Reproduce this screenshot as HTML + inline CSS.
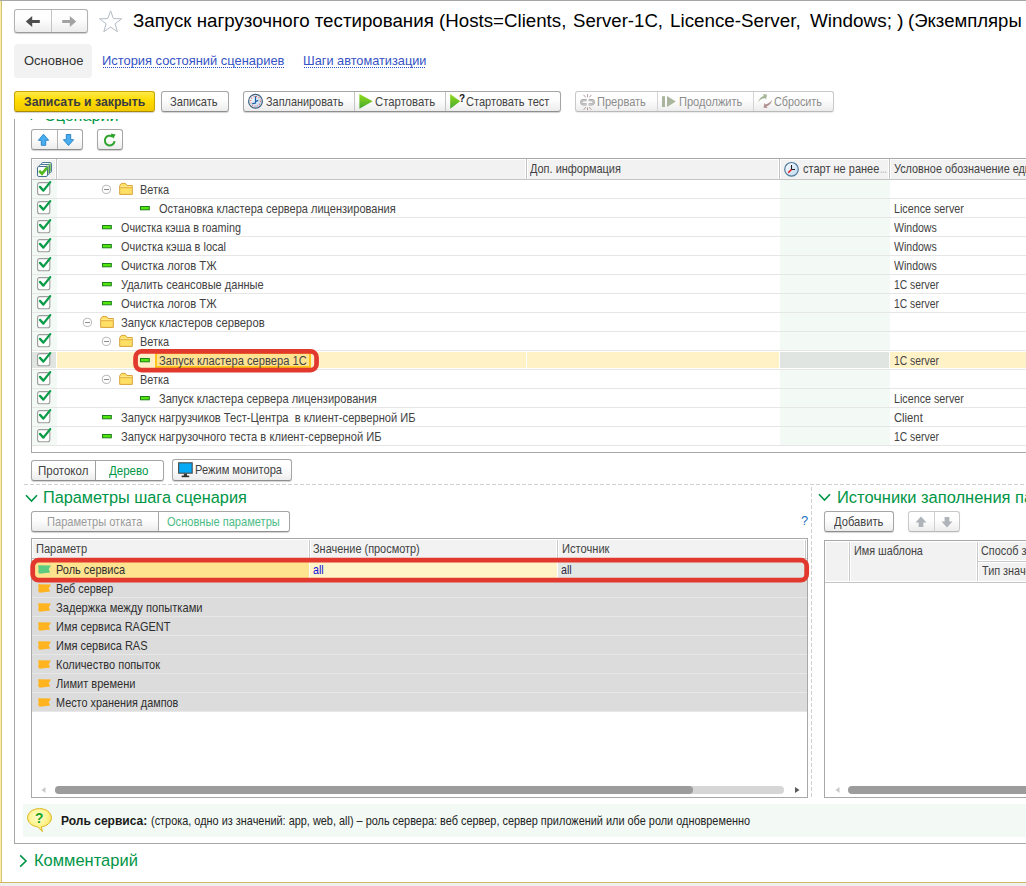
<!DOCTYPE html>
<html lang="ru"><head><meta charset="utf-8"><title>Запуск нагрузочного тестирования</title>
<style>
html,body{margin:0;padding:0;background:#fff}
body{width:1026px;height:886px;position:relative;overflow:hidden;font-family:"Liberation Sans",sans-serif}
.a{position:absolute;box-sizing:border-box}
.t{position:absolute;white-space:pre;line-height:16px;transform-origin:0 0;display:block}
.btn{border:1px solid #a6a6a6;border-bottom-color:#8e8e8e;border-radius:3px;background:linear-gradient(#ffffff 0%,#fdfdfd 45%,#ececec 100%);box-shadow:0 1px 1px rgba(0,0,0,.18)}
.ybtn{border-color:#c8a600;border-bottom-color:#a88a00;background:linear-gradient(#ffe94a 0%,#ffdc00 45%,#f2c900 100%)}
.dis{border-color:#c9c9c9;border-bottom-color:#b9b9b9;box-shadow:0 1px 1px rgba(0,0,0,.08)}
svg{overflow:visible}
</style></head><body>
<div class="a" style="left:0px;top:0px;width:1026px;height:1px;background:#a6a6a6"></div>
<div class="a" style="left:0px;top:1px;width:1px;height:882px;background:#fdeea3"></div>
<div class="a" style="left:1px;top:1px;width:1px;height:882px;background:#d3c27c"></div>
<div class="a" style="left:0px;top:882px;width:1026px;height:1px;background:#cdb85f"></div>
<div class="a" style="left:0px;top:883px;width:1026px;height:3px;background:#f0f0f0"></div>
<div class="a btn" style="left:14px;top:9px;width:74px;height:24px;border-color:#b2b2b2;border-bottom-color:#9a9a9a"></div>
<div class="a" style="left:51px;top:10px;width:1px;height:22px;background:#c4c4c4"></div>
<svg class="a" style="left:24px;top:14px" width="18" height="15" viewBox="0 0 18 15"><path d="M1.8 7.5 L8.2 1.9 V6 H15.8 V9 H8.2 V13.1 Z" fill="#4d4d4d"/></svg>
<svg class="a" style="left:60px;top:14px" width="18" height="15" viewBox="0 0 18 15"><path d="M16.2 7.5 L9.8 1.9 V6 H2.2 V9 H9.8 V13.1 Z" fill="#a3a3a3"/></svg>
<svg class="a" style="left:97px;top:8px" width="28" height="26" viewBox="0 0 28 26"><path d="M13.6 2.8 L16.4 10.6 L24.6 10.8 L18.1 15.8 L20.4 23.7 L13.6 19 L6.8 23.7 L9.1 15.8 L2.6 10.8 L10.8 10.6 Z" fill="#fff" stroke="#b4bcc4" stroke-width="1"/></svg>
<span class="t" style="left:132.60px;top:13.03px;font-size:18.67px;color:#000;transform:scaleX(1.0032);">Запуск нагрузочного тестирования</span>
<span class="t" style="left:439.10px;top:13.03px;font-size:18.67px;color:#000;transform:scaleX(1.0028);">(Hosts=Clients,</span>
<span class="t" style="left:573.10px;top:13.03px;font-size:18.67px;color:#000;transform:scaleX(0.9980);">Server-1C,</span>
<span class="t" style="left:670.10px;top:13.03px;font-size:18.67px;color:#000;transform:scaleX(1.0080);">Licence-Server,</span>
<span class="t" style="left:809.80px;top:13.03px;font-size:18.67px;color:#000;transform:scaleX(1.0131);">Windows;</span>
<span class="t" style="left:897.20px;top:13.03px;font-size:18.67px;color:#000;transform:scaleX(1.0550);">)</span>
<span class="t" style="left:908.30px;top:13.03px;font-size:18.67px;color:#000;transform:scaleX(0.9943);">(Экземпляры</span>
<div class="a" style="left:14px;top:44px;width:78px;height:34px;background:#f2f2f2;border-radius:4px"></div>
<span class="t" style="left:23.60px;top:53.38px;font-size:13.33px;color:#333;transform:scaleX(0.9730);">Основное</span>
<span class="t" style="left:102.10px;top:53.18px;font-size:13.33px;color:#3553c4;transform:scaleX(0.9677);">История состояний сценариев</span>
<div class="a" style="left:103px;top:67px;width:181px;height:1px;background:repeating-linear-gradient(90deg,#2a4fc6 0,#2a4fc6 1px,transparent 1px,transparent 2px)"></div>
<span class="t" style="left:303.10px;top:53.18px;font-size:13.33px;color:#3553c4;transform:scaleX(0.9563);">Шаги автоматизации</span>
<div class="a" style="left:304px;top:67px;width:122px;height:1px;background:repeating-linear-gradient(90deg,#2a4fc6 0,#2a4fc6 1px,transparent 1px,transparent 2px)"></div>
<div class="a btn ybtn" style="left:14px;top:91px;width:141px;height:21px;"></div>
<span class="t" style="left:23.70px;top:93.63px;font-size:12.60px;color:#3a3a42;transform:scaleX(0.9722);font-weight:bold;">Записать и закрыть</span>
<div class="a btn" style="left:161px;top:91px;width:68px;height:21px;"></div>
<span class="t" style="left:170.30px;top:93.63px;font-size:12.60px;color:#424242;transform:scaleX(0.8847);">Записать</span>
<div class="a btn" style="left:243px;top:91px;width:318px;height:21px;"></div>
<div class="a" style="left:354px;top:92px;width:1px;height:19px;background:#c4c4c4"></div>
<div class="a" style="left:445px;top:92px;width:1px;height:19px;background:#c4c4c4"></div>
<svg class="a" style="left:248px;top:93px" width="16" height="17" viewBox="0 0 16 17"><defs><linearGradient id="ck" x1="0" y1="0" x2="1" y2="1"><stop offset="0" stop-color="#ffffff"/><stop offset="1" stop-color="#b9d6f0"/></linearGradient><linearGradient id="pg" x1="0" y1="0" x2="0" y2="1"><stop offset="0" stop-color="#93de1a"/><stop offset="1" stop-color="#44a62e"/></linearGradient></defs><circle cx="7.5" cy="8.3" r="6.9" fill="url(#ck)" stroke="#3f5d7c" stroke-width="1.2"/><circle cx="7.5" cy="8.3" r="4.9" fill="none" stroke="#e8503c" stroke-width="1.1" stroke-dasharray="0.9 1.666"/><path d="M7.5 3.2 V10.4 M7.5 10.2 L4.2 10.6 M7.5 8.6 L10.2 7.400" fill="none" stroke="#1f5fa8" stroke-width="1.2"/></svg>
<span class="t" style="left:266.10px;top:93.63px;font-size:12.60px;color:#424242;transform:scaleX(0.8652);">Запланировать</span>
<svg class="a" style="left:358px;top:93px" width="17" height="17" viewBox="0 0 17 17"><path d="M1.4 0.9 L14.7 8.3 L1.4 15.7 Z" fill="url(#pg)"/></svg>
<span class="t" style="left:375.10px;top:93.63px;font-size:12.60px;color:#424242;transform:scaleX(0.9017);">Стартовать</span>
<svg class="a" style="left:450px;top:92px" width="17" height="18" viewBox="0 0 17 18"><path d="M0.2 1.9 L10.2 9.3 L0.2 16.8 Z" fill="url(#pg)"/></svg>
<span class="t" style="left:459.10px;top:90.16px;font-size:10.50px;color:#111;transform:scaleX(0.9500);font-weight:bold;">?</span>
<span class="t" style="left:466.10px;top:93.63px;font-size:12.60px;color:#424242;transform:scaleX(0.8790);">Стартовать тест</span>
<div class="a btn dis" style="left:575px;top:91px;width:259px;height:21px;"></div>
<div class="a" style="left:657px;top:92px;width:1px;height:19px;background:#d4d4d4"></div>
<div class="a" style="left:753px;top:92px;width:1px;height:19px;background:#d4d4d4"></div>
<svg class="a" style="left:579px;top:92px" width="18" height="20" viewBox="0 0 18 20"><g fill="none" stroke="#a2a2a2" stroke-width="2.2"><path d="M7.6 8.2 H4.4 a2.1 2.1 0 0 0 0 4.2 H7.6"/><path d="M9.7 8.2 H12.7 a2.1 2.1 0 0 1 0 4.2 H9.7"/></g><g fill="none" stroke="#dedede" stroke-width="0.7"><path d="M7.6 8.2 H4.4 a2.1 2.1 0 0 0 0 4.2 H7.6"/><path d="M9.7 8.2 H12.7 a2.1 2.1 0 0 1 0 4.2 H9.7"/></g><g stroke="#b59c9c" stroke-width="1"><path d="M8.5 2.2 V5.200 M4.6 2.800 L6.7 5.4 M12.4 2.800 L10.3 5.4 M8.5 18.2 V15.4 M4.6 17.800 L6.7 15.2 M12.4 17.800 L10.3 15.2"/></g></svg>
<span class="t" style="left:597.10px;top:93.63px;font-size:12.60px;color:#8c8c8c;transform:scaleX(0.8780);">Прервать</span>
<svg class="a" style="left:661px;top:94px" width="16" height="15" viewBox="0 0 16 15"><rect x="1" y="2.200" width="3" height="10.8" fill="#a9b59d"/><path d="M6 2 L14.8 7.5 L6 13 Z" fill="#a9b59d"/></svg>
<span class="t" style="left:678.60px;top:93.63px;font-size:12.60px;color:#8c8c8c;transform:scaleX(0.8797);">Продолжить</span>
<svg class="a" style="left:756px;top:92px" width="18" height="19" viewBox="0 0 18 19"><path d="M2.2 10.5 C2.6 7.200 5 4.600 8 4 L6.8 2.200 L11 2.600 L10 7.400 L8.8 5.900 C6.400 6.400 3.600 8 2.200 10.500 Z" fill="#a3b596"/><path d="M16 7.700 C15.800 11 13.200 13.600 10.400 14.200 L11.600 16 L7.600 15.800 L8.400 11 L9.600 12.400 C12 11.800 14.600 10.200 16 7.700 Z" fill="#b39191"/></svg>
<span class="t" style="left:774.10px;top:93.63px;font-size:12.60px;color:#8c8c8c;transform:scaleX(0.8562);">Сбросить</span>
<div class="a" style="left:14px;top:119px;width:1px;height:725px;background:#a8a8a8"></div>
<div class="a" style="left:14px;top:843px;width:1012px;height:1px;background:#a8a8a8"></div>
<div class="a" style="left:15px;top:119px;width:300px;height:10px;overflow:hidden">
<span class="t" style="left:28.60px;top:-12.10px;font-size:17.33px;color:#009646;transform:scaleX(0.9292);">Сценарий</span>
<svg class="a" style="left:10px;top:-7.5px" width="13" height="9" viewBox="0 0 13 9"><path d="M1 1.2 L6.5 7 L12 1.2" fill="none" stroke="#009646" stroke-width="1.6"/></svg>
</div>
<div class="a btn" style="left:31px;top:129px;width:52px;height:21px;"></div>
<div class="a" style="left:57px;top:130px;width:1px;height:19px;background:#b4b4b4"></div>
<svg class="a" style="left:36px;top:132px" width="16" height="16" viewBox="0 0 16 16"><path d="M7.5 2.2 L12.6 8.300 H9.700 V13.300 H5.300 V8.300 H2.400 Z" fill="#49aeef" stroke="#2e86c8" stroke-width="1" stroke-linejoin="round"/></svg>
<svg class="a" style="left:61px;top:132px" width="16" height="16" viewBox="0 0 16 16"><path d="M7.5 13.500 L12.600 7.700 H9.700 V2.500 H5.300 V7.700 H2.400 Z" fill="#49aeef" stroke="#2e86c8" stroke-width="1" stroke-linejoin="round"/></svg>
<div class="a btn" style="left:97px;top:129px;width:26px;height:21px;"></div>
<svg class="a" style="left:102px;top:132px" width="16" height="16" viewBox="0 0 16 16"><path d="M12.6 9.2 A4.9 4.9 0 1 1 10.6 4.6" fill="none" stroke="#2ea32e" stroke-width="2"/><path d="M8.6 1.4 L13.6 2.4 L11.2 6.8 Z" fill="#2ea32e"/></svg>
<div class="a" style="left:31px;top:158px;width:1000px;height:295px;border:1px solid #a8a8a8;border-right:none;background:#fff;box-sizing:border-box"></div>
<div class="a" style="left:32px;top:159px;width:995px;height:21px;background:#fff;border-bottom:1px solid #c4c4c4"></div>
<div class="a" style="left:33px;top:160px;width:995px;height:19px;background:#f2f2f2"></div>
<div class="a" style="left:32px;top:180px;width:25px;height:266px;background:#f3faf6"></div>
<div class="a" style="left:780px;top:180px;width:110px;height:266px;background:#f3faf6"></div>
<div class="a" style="left:55px;top:160px;width:3px;height:19px;background:#fff"></div>
<div class="a" style="left:56px;top:159px;width:1px;height:20px;background:#c4c4c4"></div>
<div class="a" style="left:525px;top:160px;width:3px;height:19px;background:#fff"></div>
<div class="a" style="left:526px;top:159px;width:1px;height:20px;background:#c4c4c4"></div>
<div class="a" style="left:778px;top:160px;width:3px;height:19px;background:#fff"></div>
<div class="a" style="left:779px;top:159px;width:1px;height:20px;background:#c4c4c4"></div>
<div class="a" style="left:888px;top:160px;width:3px;height:19px;background:#fff"></div>
<div class="a" style="left:889px;top:159px;width:1px;height:20px;background:#c4c4c4"></div>
<svg class="a" style="left:35px;top:160px" width="20" height="18" viewBox="0 0 20 18"><rect x="6.5" y="2.5" width="10" height="10" rx="1.4" fill="#fff" stroke="#4f7a9c"/><rect x="13" y="3.6" width="3" height="8" fill="#86cc66"/><rect x="4.500" y="4.500" width="10" height="10" rx="1.4" fill="#fff" stroke="#4f7a9c"/><rect x="11" y="5.6" width="3" height="8" fill="#86cc66"/><rect x="2.500" y="6.500" width="10" height="10" rx="1.4" fill="#fff" stroke="#456f92"/><path d="M4.200 10.800 L7 13.700 L12.200 7.600" fill="none" stroke="#52b822" stroke-width="2.7"/></svg>
<span class="t" style="left:530.10px;top:160.63px;font-size:12.60px;color:#424242;transform:scaleX(0.8692);">Доп. информация</span>
<svg class="a" style="left:783px;top:161px" width="17" height="17" viewBox="0 0 17 17"><circle cx="8.5" cy="8.3" r="6.8" fill="url(#ck)" stroke="#4d7a9c" stroke-width="1.2"/><path d="M8.5 4 V8.500 H12" fill="none" stroke="#222" stroke-width="1.1"/><path d="M8.5 8.5 L5.2 11.800" fill="none" stroke="#f01818" stroke-width="1.5"/></svg>
<span class="t" style="left:803.10px;top:160.63px;font-size:12.60px;color:#424242;transform:scaleX(0.8737);">старт не ранее</span>
<span class="t" style="left:879.60px;top:160.63px;font-size:12.60px;color:#a8a8a8;transform:scaleX(0.6598);">...</span>
<span class="t" style="left:893.60px;top:160.63px;font-size:12.60px;color:#424242;transform:scaleX(0.8619);">Условное обозначение единицы</span>
<div class="a" style="left:32px;top:198px;width:1000px;height:1px;background:#e6e6e6"></div>
<svg class="a" style="left:37px;top:181px" width="14" height="15" viewBox="0 0 14 15"><rect x="0.6" y="1.6" width="12.2" height="12.2" rx="2" fill="#fff" stroke="#9c9c9c" stroke-width="1.1"/><path d="M3 5.9 L6.4 9.600 L13.200 1.100" fill="none" stroke="#0a9c48" stroke-width="2.3" stroke-linecap="round" stroke-linejoin="round"/></svg>
<svg class="a" style="left:101px;top:184px" width="10" height="10" viewBox="0 0 10 10"><circle cx="5.4" cy="5.4" r="4.1" fill="#fff" stroke="#bcbcbc" stroke-width="1.1"/><path d="M3 5.5 H8" stroke="#8c8c8c"/></svg>
<svg class="a" style="left:119px;top:182px" width="14" height="14" viewBox="0 0 14 14"><path d="M0.7 3.700 L2.5 1.4 H6.5 L8 3.5 H13.3 V12.4 H0.7 Z" fill="#ffe066" stroke="#d9a23c" stroke-linejoin="round"/><path d="M1.2 5.7 H12.8" stroke="#e0a840"/><path d="M1.3 4.6 H12.7" stroke="#ffea90"/></svg>
<span class="t" style="left:140.30px;top:181.63px;font-size:12.60px;color:#424242;transform:scaleX(0.8680);">Ветка</span>
<div class="a" style="left:32px;top:217px;width:1000px;height:1px;background:#e6e6e6"></div>
<svg class="a" style="left:37px;top:200px" width="14" height="15" viewBox="0 0 14 15"><rect x="0.6" y="1.6" width="12.2" height="12.2" rx="2" fill="#fff" stroke="#9c9c9c" stroke-width="1.1"/><path d="M3 5.9 L6.4 9.600 L13.200 1.100" fill="none" stroke="#0a9c48" stroke-width="2.3" stroke-linecap="round" stroke-linejoin="round"/></svg>
<svg class="a" style="left:140px;top:206px" width="10" height="5" viewBox="0 0 10 5"><rect x="0.5" y="0.5" width="8.8" height="3.3" fill="#52e60c" stroke="#1d7f1d"/></svg>
<span class="t" style="left:158.80px;top:200.63px;font-size:12.60px;color:#424242;transform:scaleX(0.8762);">Остановка кластера сервера лицензирования</span>
<span class="t" style="left:894.40px;top:200.63px;font-size:12.60px;color:#424242;transform:scaleX(0.8523);">Licence server</span>
<div class="a" style="left:32px;top:236px;width:1000px;height:1px;background:#e6e6e6"></div>
<svg class="a" style="left:37px;top:219px" width="14" height="15" viewBox="0 0 14 15"><rect x="0.6" y="1.6" width="12.2" height="12.2" rx="2" fill="#fff" stroke="#9c9c9c" stroke-width="1.1"/><path d="M3 5.9 L6.4 9.600 L13.200 1.100" fill="none" stroke="#0a9c48" stroke-width="2.3" stroke-linecap="round" stroke-linejoin="round"/></svg>
<svg class="a" style="left:102px;top:225px" width="10" height="5" viewBox="0 0 10 5"><rect x="0.5" y="0.5" width="8.8" height="3.3" fill="#52e60c" stroke="#1d7f1d"/></svg>
<span class="t" style="left:120.80px;top:219.63px;font-size:12.60px;color:#424242;transform:scaleX(0.8557);">Очистка кэша в roaming</span>
<span class="t" style="left:894.40px;top:219.63px;font-size:12.60px;color:#424242;transform:scaleX(0.8367);">Windows</span>
<div class="a" style="left:32px;top:255px;width:1000px;height:1px;background:#e6e6e6"></div>
<svg class="a" style="left:37px;top:238px" width="14" height="15" viewBox="0 0 14 15"><rect x="0.6" y="1.6" width="12.2" height="12.2" rx="2" fill="#fff" stroke="#9c9c9c" stroke-width="1.1"/><path d="M3 5.9 L6.4 9.600 L13.200 1.100" fill="none" stroke="#0a9c48" stroke-width="2.3" stroke-linecap="round" stroke-linejoin="round"/></svg>
<svg class="a" style="left:102px;top:244px" width="10" height="5" viewBox="0 0 10 5"><rect x="0.5" y="0.5" width="8.8" height="3.3" fill="#52e60c" stroke="#1d7f1d"/></svg>
<span class="t" style="left:120.80px;top:238.63px;font-size:12.60px;color:#424242;transform:scaleX(0.8716);">Очистка кэша в local</span>
<span class="t" style="left:894.40px;top:238.63px;font-size:12.60px;color:#424242;transform:scaleX(0.8367);">Windows</span>
<div class="a" style="left:32px;top:274px;width:1000px;height:1px;background:#e6e6e6"></div>
<svg class="a" style="left:37px;top:257px" width="14" height="15" viewBox="0 0 14 15"><rect x="0.6" y="1.6" width="12.2" height="12.2" rx="2" fill="#fff" stroke="#9c9c9c" stroke-width="1.1"/><path d="M3 5.9 L6.4 9.600 L13.200 1.100" fill="none" stroke="#0a9c48" stroke-width="2.3" stroke-linecap="round" stroke-linejoin="round"/></svg>
<svg class="a" style="left:102px;top:263px" width="10" height="5" viewBox="0 0 10 5"><rect x="0.5" y="0.5" width="8.8" height="3.3" fill="#52e60c" stroke="#1d7f1d"/></svg>
<span class="t" style="left:120.80px;top:257.63px;font-size:12.60px;color:#424242;transform:scaleX(0.8925);">Очистка логов ТЖ</span>
<span class="t" style="left:894.40px;top:257.63px;font-size:12.60px;color:#424242;transform:scaleX(0.8367);">Windows</span>
<div class="a" style="left:32px;top:293px;width:1000px;height:1px;background:#e6e6e6"></div>
<svg class="a" style="left:37px;top:276px" width="14" height="15" viewBox="0 0 14 15"><rect x="0.6" y="1.6" width="12.2" height="12.2" rx="2" fill="#fff" stroke="#9c9c9c" stroke-width="1.1"/><path d="M3 5.9 L6.4 9.600 L13.200 1.100" fill="none" stroke="#0a9c48" stroke-width="2.3" stroke-linecap="round" stroke-linejoin="round"/></svg>
<svg class="a" style="left:102px;top:282px" width="10" height="5" viewBox="0 0 10 5"><rect x="0.5" y="0.5" width="8.8" height="3.3" fill="#52e60c" stroke="#1d7f1d"/></svg>
<span class="t" style="left:120.80px;top:276.63px;font-size:12.60px;color:#424242;transform:scaleX(0.8759);">Удалить сеансовые данные</span>
<span class="t" style="left:894.40px;top:276.63px;font-size:12.60px;color:#424242;transform:scaleX(0.8211);">1C server</span>
<div class="a" style="left:32px;top:312px;width:1000px;height:1px;background:#e6e6e6"></div>
<svg class="a" style="left:37px;top:295px" width="14" height="15" viewBox="0 0 14 15"><rect x="0.6" y="1.6" width="12.2" height="12.2" rx="2" fill="#fff" stroke="#9c9c9c" stroke-width="1.1"/><path d="M3 5.9 L6.4 9.600 L13.200 1.100" fill="none" stroke="#0a9c48" stroke-width="2.3" stroke-linecap="round" stroke-linejoin="round"/></svg>
<svg class="a" style="left:102px;top:301px" width="10" height="5" viewBox="0 0 10 5"><rect x="0.5" y="0.5" width="8.8" height="3.3" fill="#52e60c" stroke="#1d7f1d"/></svg>
<span class="t" style="left:120.80px;top:295.63px;font-size:12.60px;color:#424242;transform:scaleX(0.8925);">Очистка логов ТЖ</span>
<span class="t" style="left:894.40px;top:295.63px;font-size:12.60px;color:#424242;transform:scaleX(0.8211);">1C server</span>
<div class="a" style="left:32px;top:331px;width:1000px;height:1px;background:#e6e6e6"></div>
<svg class="a" style="left:37px;top:314px" width="14" height="15" viewBox="0 0 14 15"><rect x="0.6" y="1.6" width="12.2" height="12.2" rx="2" fill="#fff" stroke="#9c9c9c" stroke-width="1.1"/><path d="M3 5.9 L6.4 9.600 L13.200 1.100" fill="none" stroke="#0a9c48" stroke-width="2.3" stroke-linecap="round" stroke-linejoin="round"/></svg>
<svg class="a" style="left:82px;top:317px" width="10" height="10" viewBox="0 0 10 10"><circle cx="5.4" cy="5.4" r="4.1" fill="#fff" stroke="#bcbcbc" stroke-width="1.1"/><path d="M3 5.5 H8" stroke="#8c8c8c"/></svg>
<svg class="a" style="left:100px;top:315px" width="14" height="14" viewBox="0 0 14 14"><path d="M0.7 3.700 L2.5 1.4 H6.5 L8 3.5 H13.3 V12.4 H0.7 Z" fill="#ffe066" stroke="#d9a23c" stroke-linejoin="round"/><path d="M1.2 5.7 H12.8" stroke="#e0a840"/><path d="M1.3 4.6 H12.7" stroke="#ffea90"/></svg>
<span class="t" style="left:121.30px;top:314.63px;font-size:12.60px;color:#424242;transform:scaleX(0.8945);">Запуск кластеров серверов</span>
<div class="a" style="left:32px;top:350px;width:1000px;height:1px;background:#e6e6e6"></div>
<svg class="a" style="left:37px;top:333px" width="14" height="15" viewBox="0 0 14 15"><rect x="0.6" y="1.6" width="12.2" height="12.2" rx="2" fill="#fff" stroke="#9c9c9c" stroke-width="1.1"/><path d="M3 5.9 L6.4 9.600 L13.200 1.100" fill="none" stroke="#0a9c48" stroke-width="2.3" stroke-linecap="round" stroke-linejoin="round"/></svg>
<svg class="a" style="left:101px;top:336px" width="10" height="10" viewBox="0 0 10 10"><circle cx="5.4" cy="5.4" r="4.1" fill="#fff" stroke="#bcbcbc" stroke-width="1.1"/><path d="M3 5.5 H8" stroke="#8c8c8c"/></svg>
<svg class="a" style="left:119px;top:334px" width="14" height="14" viewBox="0 0 14 14"><path d="M0.7 3.700 L2.5 1.4 H6.5 L8 3.5 H13.3 V12.4 H0.7 Z" fill="#ffe066" stroke="#d9a23c" stroke-linejoin="round"/><path d="M1.2 5.7 H12.8" stroke="#e0a840"/><path d="M1.3 4.6 H12.7" stroke="#ffea90"/></svg>
<span class="t" style="left:140.30px;top:333.63px;font-size:12.60px;color:#424242;transform:scaleX(0.8680);">Ветка</span>
<div class="a" style="left:32px;top:351px;width:1000px;height:18px;background:#fff"></div>
<div class="a" style="left:32px;top:352px;width:24px;height:16px;background:#e1e5e2"></div>
<div class="a" style="left:57px;top:352px;width:469px;height:16px;background:#fff2c7"></div>
<div class="a" style="left:527px;top:352px;width:252px;height:16px;background:#fff2c7"></div>
<div class="a" style="left:780px;top:352px;width:109px;height:16px;background:#e1e5e2"></div>
<div class="a" style="left:890px;top:352px;width:140px;height:16px;background:#fff2c7"></div>
<div class="a" style="left:32px;top:369px;width:1000px;height:1px;background:#e6e6e6"></div>
<svg class="a" style="left:37px;top:352px" width="14" height="15" viewBox="0 0 14 15"><rect x="0.6" y="1.6" width="12.2" height="12.2" rx="2" fill="#fff" stroke="#9c9c9c" stroke-width="1.1"/><path d="M3 5.9 L6.4 9.600 L13.200 1.100" fill="none" stroke="#0a9c48" stroke-width="2.3" stroke-linecap="round" stroke-linejoin="round"/></svg>
<svg class="a" style="left:140px;top:358px" width="10" height="5" viewBox="0 0 10 5"><rect x="0.5" y="0.5" width="8.8" height="3.3" fill="#52e60c" stroke="#1d7f1d"/></svg>
<div class="a" style="left:136px;top:352px;width:180px;height:16px;background:#ffefc6"></div>
<div class="a" style="left:155px;top:352px;width:156px;height:16px;background:#ffe391;border:2px solid #ffc31c;box-sizing:border-box"></div>
<svg class="a" style="left:140px;top:358px" width="10" height="5" viewBox="0 0 10 5"><rect x="0.5" y="0.5" width="8.8" height="3.3" fill="#52e60c" stroke="#1d7f1d"/></svg>
<span class="t" style="left:158.80px;top:352.63px;font-size:12.60px;color:#424242;transform:scaleX(0.8854);">Запуск кластера сервера 1С</span>
<span class="t" style="left:894.40px;top:352.63px;font-size:12.60px;color:#424242;transform:scaleX(0.8211);">1C server</span>
<div class="a" style="left:32px;top:388px;width:1000px;height:1px;background:#e6e6e6"></div>
<svg class="a" style="left:37px;top:371px" width="14" height="15" viewBox="0 0 14 15"><rect x="0.6" y="1.6" width="12.2" height="12.2" rx="2" fill="#fff" stroke="#9c9c9c" stroke-width="1.1"/><path d="M3 5.9 L6.4 9.600 L13.200 1.100" fill="none" stroke="#0a9c48" stroke-width="2.3" stroke-linecap="round" stroke-linejoin="round"/></svg>
<svg class="a" style="left:101px;top:374px" width="10" height="10" viewBox="0 0 10 10"><circle cx="5.4" cy="5.4" r="4.1" fill="#fff" stroke="#bcbcbc" stroke-width="1.1"/><path d="M3 5.5 H8" stroke="#8c8c8c"/></svg>
<svg class="a" style="left:119px;top:372px" width="14" height="14" viewBox="0 0 14 14"><path d="M0.7 3.700 L2.5 1.4 H6.5 L8 3.5 H13.3 V12.4 H0.7 Z" fill="#ffe066" stroke="#d9a23c" stroke-linejoin="round"/><path d="M1.2 5.7 H12.8" stroke="#e0a840"/><path d="M1.3 4.6 H12.7" stroke="#ffea90"/></svg>
<span class="t" style="left:140.30px;top:371.63px;font-size:12.60px;color:#424242;transform:scaleX(0.8680);">Ветка</span>
<div class="a" style="left:32px;top:407px;width:1000px;height:1px;background:#e6e6e6"></div>
<svg class="a" style="left:37px;top:390px" width="14" height="15" viewBox="0 0 14 15"><rect x="0.6" y="1.6" width="12.2" height="12.2" rx="2" fill="#fff" stroke="#9c9c9c" stroke-width="1.1"/><path d="M3 5.9 L6.4 9.600 L13.200 1.100" fill="none" stroke="#0a9c48" stroke-width="2.3" stroke-linecap="round" stroke-linejoin="round"/></svg>
<svg class="a" style="left:140px;top:396px" width="10" height="5" viewBox="0 0 10 5"><rect x="0.5" y="0.5" width="8.8" height="3.3" fill="#52e60c" stroke="#1d7f1d"/></svg>
<span class="t" style="left:158.80px;top:390.63px;font-size:12.60px;color:#424242;transform:scaleX(0.8802);">Запуск кластера сервера лицензирования</span>
<span class="t" style="left:894.40px;top:390.63px;font-size:12.60px;color:#424242;transform:scaleX(0.8523);">Licence server</span>
<div class="a" style="left:32px;top:426px;width:1000px;height:1px;background:#e6e6e6"></div>
<svg class="a" style="left:37px;top:409px" width="14" height="15" viewBox="0 0 14 15"><rect x="0.6" y="1.6" width="12.2" height="12.2" rx="2" fill="#fff" stroke="#9c9c9c" stroke-width="1.1"/><path d="M3 5.9 L6.4 9.600 L13.200 1.100" fill="none" stroke="#0a9c48" stroke-width="2.3" stroke-linecap="round" stroke-linejoin="round"/></svg>
<svg class="a" style="left:102px;top:415px" width="10" height="5" viewBox="0 0 10 5"><rect x="0.5" y="0.5" width="8.8" height="3.3" fill="#52e60c" stroke="#1d7f1d"/></svg>
<span class="t" style="left:120.80px;top:409.63px;font-size:12.60px;color:#424242;transform:scaleX(0.8833);">Запуск нагрузчиков Тест-Центра  в клиент-серверной ИБ</span>
<span class="t" style="left:894.40px;top:409.63px;font-size:12.60px;color:#424242;transform:scaleX(0.8929);">Client</span>
<div class="a" style="left:32px;top:445px;width:1000px;height:1px;background:#e6e6e6"></div>
<svg class="a" style="left:37px;top:428px" width="14" height="15" viewBox="0 0 14 15"><rect x="0.6" y="1.6" width="12.2" height="12.2" rx="2" fill="#fff" stroke="#9c9c9c" stroke-width="1.1"/><path d="M3 5.9 L6.4 9.600 L13.200 1.100" fill="none" stroke="#0a9c48" stroke-width="2.3" stroke-linecap="round" stroke-linejoin="round"/></svg>
<svg class="a" style="left:102px;top:434px" width="10" height="5" viewBox="0 0 10 5"><rect x="0.5" y="0.5" width="8.8" height="3.3" fill="#52e60c" stroke="#1d7f1d"/></svg>
<span class="t" style="left:120.80px;top:428.63px;font-size:12.60px;color:#424242;transform:scaleX(0.8857);">Запуск нагрузочного теста в клиент-серверной ИБ</span>
<span class="t" style="left:894.40px;top:428.63px;font-size:12.60px;color:#424242;transform:scaleX(0.8211);">1C server</span>
<svg class="a" style="left:130px;top:346px" width="192" height="30" viewBox="0 0 192 30"><rect x="5.55" y="5.35" width="181" height="18.7" rx="6" fill="none" stroke="#e2392f" stroke-width="4.7"/></svg>
<div class="a btn" style="left:31px;top:460px;width:133px;height:21px;"></div>
<div class="a" style="left:95px;top:461px;width:1px;height:19px;background:#a0a0a0"></div>
<div class="a" style="left:96px;top:461px;width:67px;height:19px;background:#fff;border-radius:0 3px 3px 0"></div>
<span class="t" style="left:38.10px;top:462.63px;font-size:12.60px;color:#424242;transform:scaleX(0.9132);">Протокол</span>
<span class="t" style="left:109.10px;top:462.63px;font-size:12.60px;color:#009646;transform:scaleX(0.9143);">Дерево</span>
<div class="a btn" style="left:172px;top:459px;width:120px;height:22px;"></div>
<svg class="a" style="left:178px;top:462px" width="15" height="17" viewBox="0 0 15 17"><rect x="0.6" y="0.8" width="13.6" height="10.400" fill="#06a9f3" stroke="#4c4c4c" stroke-width="1.1"/><rect x="5.800" y="11.600" width="3.2" height="2.4" fill="#3c3c3c"/><rect x="3.600" y="13.600" width="7.600" height="1.600" fill="#2e2e2e"/></svg>
<span class="t" style="left:194.60px;top:462.13px;font-size:12.60px;color:#424242;transform:scaleX(0.8828);">Режим монитора</span>
<div class="a" style="left:24px;top:484px;width:1002px;height:1px;background:repeating-linear-gradient(90deg,#d0d0d0 0,#d0d0d0 4px,transparent 4px,transparent 6px)"></div>
<div class="a" style="left:811px;top:487px;width:1px;height:310px;background:repeating-linear-gradient(180deg,#d0d0d0 0,#d0d0d0 4px,transparent 4px,transparent 6px)"></div>
<svg class="a" style="left:25px;top:494px" width="13" height="9" viewBox="0 0 13 9"><path d="M1 1.2 L6.5 7 L12 1.2" fill="none" stroke="#009646" stroke-width="1.6"/></svg>
<span class="t" style="left:43.30px;top:488.90px;font-size:17.33px;color:#009646;transform:scaleX(0.9390);">Параметры шага сценария</span>
<div class="a btn" style="left:31px;top:511px;width:259px;height:21px;"></div>
<div class="a" style="left:158px;top:512px;width:1px;height:19px;background:#a8a8a8"></div>
<div class="a" style="left:159px;top:512px;width:130px;height:19px;background:#fff;border-radius:0 3px 3px 0"></div>
<span class="t" style="left:46.60px;top:513.63px;font-size:12.60px;color:#9a9a9a;transform:scaleX(0.8804);">Параметры отката</span>
<span class="t" style="left:167.10px;top:513.63px;font-size:12.60px;color:#4cbc86;transform:scaleX(0.8802);">Основные параметры</span>
<span class="t" style="left:800.70px;top:513.32px;font-size:13.50px;color:#1a70c4;transform:scaleX(0.9500);">?</span>
<div class="a" style="left:31px;top:538px;width:777px;height:260px;border:1px solid #a8a8a8;background:#fff;box-sizing:border-box"></div>
<div class="a" style="left:32px;top:539px;width:775px;height:20px;background:#fff;border-bottom:1px solid #c4c4c4"></div>
<div class="a" style="left:33px;top:540px;width:773px;height:18px;background:#f2f2f2"></div>
<div class="a" style="left:308px;top:540px;width:3px;height:18px;background:#fff"></div>
<div class="a" style="left:309px;top:540px;width:1px;height:18px;background:#c9c9c9"></div>
<div class="a" style="left:556px;top:540px;width:3px;height:18px;background:#fff"></div>
<div class="a" style="left:557px;top:540px;width:1px;height:18px;background:#c9c9c9"></div>
<div class="a" style="left:804px;top:540px;width:1px;height:18px;background:#fff"></div>
<div class="a" style="left:805px;top:540px;width:1px;height:18px;background:#c9c9c9"></div>
<span class="t" style="left:35.50px;top:540.63px;font-size:12.60px;color:#424242;transform:scaleX(0.8797);">Параметр</span>
<span class="t" style="left:313.00px;top:540.63px;font-size:12.60px;color:#424242;transform:scaleX(0.8676);">Значение (просмотр)</span>
<span class="t" style="left:561.70px;top:540.63px;font-size:12.60px;color:#424242;transform:scaleX(0.8827);">Источник</span>
<div class="a" style="left:32px;top:560px;width:277px;height:19px;background:#ffe48f"></div>
<div class="a" style="left:310px;top:560px;width:247px;height:19px;background:#fff3c8"></div>
<div class="a" style="left:558px;top:560px;width:249px;height:19px;background:#e4e8e5"></div>
<div class="a" style="left:309px;top:560px;width:1px;height:19px;background:#fff"></div>
<div class="a" style="left:557px;top:560px;width:1px;height:19px;background:#fff"></div>
<svg class="a" style="left:37px;top:564px" width="15" height="11" viewBox="0 0 15 11"><path d="M1.1 1.300 L14 1.500 L11.700 5.200 L13.200 8.600 L2.500 9.800 L1.200 8 L1.600 5 Z" fill="#5bcb7f"/></svg>
<span class="t" style="left:313.00px;top:561.63px;font-size:12.60px;color:#1414dc;transform:scaleX(0.8492);">all</span>
<span class="t" style="left:561.00px;top:561.63px;font-size:12.60px;color:#2c2c44;transform:scaleX(0.8492);">all</span>
<span class="t" style="left:56.40px;top:561.83px;font-size:12.60px;color:#2e2e2e;transform:scaleX(0.8705);">Роль сервиса</span>
<div class="a" style="left:32px;top:579px;width:775px;height:19px;background:#dcdcdc;border-bottom:1px solid #e7e7e7;box-sizing:border-box"></div>
<svg class="a" style="left:37px;top:583px" width="15" height="11" viewBox="0 0 15 11"><path d="M1.1 1.300 L14 1.500 L11.700 5.200 L13.200 8.600 L2.500 9.800 L1.200 8 L1.600 5 Z" fill="#ffb31f"/></svg>
<span class="t" style="left:56.40px;top:580.83px;font-size:12.60px;color:#2e2e2e;transform:scaleX(0.8579);">Веб сервер</span>
<div class="a" style="left:32px;top:598px;width:775px;height:19px;background:#dcdcdc;border-bottom:1px solid #e7e7e7;box-sizing:border-box"></div>
<svg class="a" style="left:37px;top:602px" width="15" height="11" viewBox="0 0 15 11"><path d="M1.1 1.300 L14 1.500 L11.700 5.200 L13.200 8.600 L2.500 9.800 L1.200 8 L1.600 5 Z" fill="#ffb31f"/></svg>
<span class="t" style="left:56.40px;top:599.83px;font-size:12.60px;color:#2e2e2e;transform:scaleX(0.8841);">Задержка между попытками</span>
<div class="a" style="left:32px;top:617px;width:775px;height:19px;background:#dcdcdc;border-bottom:1px solid #e7e7e7;box-sizing:border-box"></div>
<svg class="a" style="left:37px;top:621px" width="15" height="11" viewBox="0 0 15 11"><path d="M1.1 1.300 L14 1.500 L11.700 5.200 L13.200 8.600 L2.500 9.800 L1.200 8 L1.600 5 Z" fill="#ffb31f"/></svg>
<span class="t" style="left:56.40px;top:618.83px;font-size:12.60px;color:#2e2e2e;transform:scaleX(0.8705);">Имя сервиса RAGENT</span>
<div class="a" style="left:32px;top:636px;width:775px;height:19px;background:#dcdcdc;border-bottom:1px solid #e7e7e7;box-sizing:border-box"></div>
<svg class="a" style="left:37px;top:640px" width="15" height="11" viewBox="0 0 15 11"><path d="M1.1 1.300 L14 1.500 L11.700 5.200 L13.200 8.600 L2.500 9.800 L1.200 8 L1.600 5 Z" fill="#ffb31f"/></svg>
<span class="t" style="left:56.40px;top:637.83px;font-size:12.60px;color:#2e2e2e;transform:scaleX(0.8738);">Имя сервиса RAS</span>
<div class="a" style="left:32px;top:655px;width:775px;height:19px;background:#dcdcdc;border-bottom:1px solid #e7e7e7;box-sizing:border-box"></div>
<svg class="a" style="left:37px;top:659px" width="15" height="11" viewBox="0 0 15 11"><path d="M1.1 1.300 L14 1.500 L11.700 5.200 L13.200 8.600 L2.500 9.800 L1.200 8 L1.600 5 Z" fill="#ffb31f"/></svg>
<span class="t" style="left:56.40px;top:656.83px;font-size:12.60px;color:#2e2e2e;transform:scaleX(0.8742);">Количество попыток</span>
<div class="a" style="left:32px;top:674px;width:775px;height:19px;background:#dcdcdc;border-bottom:1px solid #e7e7e7;box-sizing:border-box"></div>
<svg class="a" style="left:37px;top:678px" width="15" height="11" viewBox="0 0 15 11"><path d="M1.1 1.300 L14 1.500 L11.700 5.200 L13.200 8.600 L2.500 9.800 L1.200 8 L1.600 5 Z" fill="#ffb31f"/></svg>
<span class="t" style="left:56.40px;top:675.83px;font-size:12.60px;color:#2e2e2e;transform:scaleX(0.8764);">Лимит времени</span>
<div class="a" style="left:32px;top:693px;width:775px;height:19px;background:#dcdcdc;border-bottom:1px solid #e7e7e7;box-sizing:border-box"></div>
<svg class="a" style="left:37px;top:697px" width="15" height="11" viewBox="0 0 15 11"><path d="M1.1 1.300 L14 1.500 L11.700 5.200 L13.200 8.600 L2.500 9.800 L1.200 8 L1.600 5 Z" fill="#ffb31f"/></svg>
<span class="t" style="left:56.40px;top:694.83px;font-size:12.60px;color:#2e2e2e;transform:scaleX(0.8604);">Место хранения дампов</span>
<svg class="a" style="left:28px;top:555px" width="784" height="30" viewBox="0 0 784 30"><rect x="4.7" y="5.2" width="774" height="20" rx="6" fill="none" stroke="#e2392f" stroke-width="4.8"/></svg>
<svg class="a" style="left:40px;top:786px" width="8" height="8" viewBox="0 0 8 8"><path d="M5.5 1 L1.5 4 L5.5 7 Z" fill="#c9c9c9"/></svg>
<div class="a" style="left:55px;top:786px;width:729px;height:8px;background:#d6d6d6;border-radius:4px"></div>
<div class="a" style="left:55px;top:786px;width:638px;height:8px;background:#9c9c9c;border-radius:4px"></div>
<svg class="a" style="left:793px;top:786px" width="8" height="8" viewBox="0 0 8 8"><path d="M2 1 L6.5 4 L2 7 Z" fill="#5a5a5a"/></svg>
<svg class="a" style="left:817.5px;top:493.4px" width="13" height="9" viewBox="0 0 13 9"><path d="M1 1.2 L6.5 7 L12 1.2" fill="none" stroke="#009646" stroke-width="1.6"/></svg>
<span class="t" style="left:836.80px;top:488.90px;font-size:17.33px;color:#009646;transform:scaleX(0.9500);">Источники заполнения параметров</span>
<div class="a btn" style="left:824px;top:511px;width:70px;height:21px;"></div>
<span class="t" style="left:834.30px;top:513.63px;font-size:12.60px;color:#424242;transform:scaleX(0.8870);">Добавить</span>
<div class="a btn dis" style="left:908px;top:511px;width:52px;height:21px;"></div>
<div class="a" style="left:934px;top:512px;width:1px;height:19px;background:#d0d0d0"></div>
<svg class="a" style="left:913px;top:513.5px" width="16" height="16" viewBox="0 0 16 16"><path d="M8 2.5 L13.5 8.6 H10.4 V13 H5.6 V8.6 H2.5 Z" fill="#aeb4ba"/></svg>
<svg class="a" style="left:939px;top:513.5px" width="16" height="16" viewBox="0 0 16 16"><g transform="rotate(180 8 8)"><path d="M8 2.5 L13.5 8.6 H10.4 V13 H5.6 V8.6 H2.5 Z" fill="#aeb4ba"/></g></svg>
<div class="a" style="left:824px;top:540px;width:210px;height:258px;border:1px solid #a8a8a8;border-right:none;background:#fff;box-sizing:border-box"></div>
<div class="a" style="left:825px;top:541px;width:205px;height:42px;background:#fff;border-bottom:1px solid #c4c4c4"></div>
<div class="a" style="left:826px;top:542px;width:204px;height:39px;background:#f2f2f2"></div>
<div class="a" style="left:848px;top:542px;width:3px;height:39px;background:#fff"></div>
<div class="a" style="left:849px;top:542px;width:1px;height:39px;background:#c9c9c9"></div>
<div class="a" style="left:976px;top:542px;width:3px;height:39px;background:#fff"></div>
<div class="a" style="left:977px;top:542px;width:1px;height:39px;background:#c9c9c9"></div>
<div class="a" style="left:978px;top:560px;width:60px;height:3px;background:#fff"></div>
<div class="a" style="left:978px;top:561px;width:60px;height:1px;background:#c9c9c9"></div>
<span class="t" style="left:853.60px;top:543.13px;font-size:12.60px;color:#424242;transform:scaleX(0.8584);">Имя шаблона</span>
<span class="t" style="left:981.30px;top:543.13px;font-size:12.60px;color:#424242;transform:scaleX(0.8619);">Способ заполнения</span>
<span class="t" style="left:982.10px;top:563.43px;font-size:12.60px;color:#424242;transform:scaleX(0.8619);">Тип значения</span>
<svg class="a" style="left:834px;top:786px" width="8" height="8" viewBox="0 0 8 8"><path d="M5.5 1 L1.5 4 L5.5 7 Z" fill="#c9c9c9"/></svg>
<div class="a" style="left:848px;top:786px;width:200px;height:8px;background:#9c9c9c;border-radius:4px"></div>
<div class="a" style="left:23px;top:804px;width:1003px;height:33px;background:#f3faf6"></div>
<svg class="a" style="left:25px;top:806px" width="30" height="28" viewBox="0 0 30 28"><defs><radialGradient id="bg" cx="0.45" cy="0.35" r="0.75"><stop offset="0" stop-color="#fffdd8"/><stop offset="0.55" stop-color="#fff38a"/><stop offset="1" stop-color="#f3cc2e"/></radialGradient></defs><path d="M14.5 2.6 C21.2 2.6 26.4 6.6 26.4 11.7 C26.4 16.400 22 20.200 16.4 20.800 L17.4 25.6 L12.6 20.800 C7 20.200 2.600 16.400 2.600 11.700 C2.600 6.600 7.800 2.600 14.500 2.600 Z" fill="url(#bg)" stroke="#dcb521" stroke-width="1"/></svg>
<span class="t" style="left:34.70px;top:810.28px;font-size:14.50px;color:#1ea51e;transform:scaleX(0.9500);font-weight:bold;">?</span>
<span class="t" style="left:60.60px;top:812.63px;font-size:12.60px;color:#1a1a1a;transform:scaleX(0.9564);font-weight:bold;">Роль сервиса:</span>
<span class="t" style="left:150.60px;top:812.63px;font-size:12.60px;color:#222;transform:scaleX(0.8660);">(строка, одно из значений: app, web, all) – роль сервера: веб сервер, сервер приложений или обе роли одновременно</span>
<svg class="a" style="left:19px;top:853.5px" width="9" height="14" viewBox="0 0 9 14"><path d="M1.2 1.4 L7 7 L1.2 12.6" fill="none" stroke="#009646" stroke-width="1.6"/></svg>
<span class="t" style="left:33.70px;top:852.30px;font-size:17.33px;color:#009646;transform:scaleX(0.9516);">Комментарий</span>
</body></html>
